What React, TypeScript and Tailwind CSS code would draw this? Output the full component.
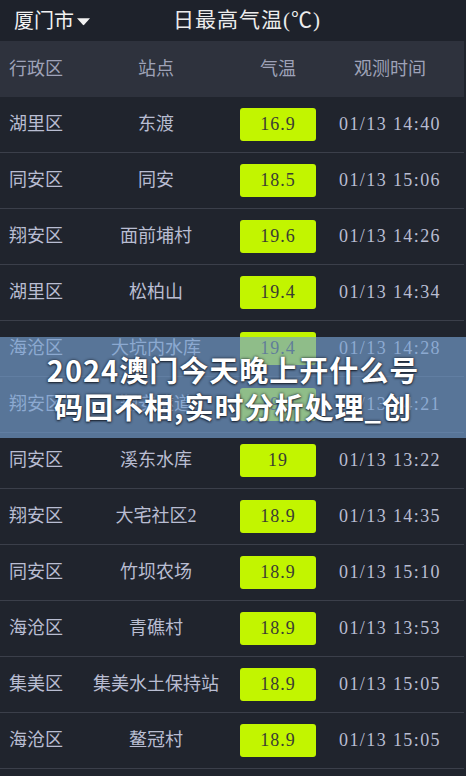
import React from 'react';

interface StationRow {
  district: string;
  station: string;
  temp: string;
  time: string;
}

const rows: StationRow[] = [
  { district: '湖里区', station: '东渡', temp: '16.9', time: '01/13 14:40' },
  { district: '同安区', station: '同安', temp: '18.5', time: '01/13 15:06' },
  { district: '翔安区', station: '面前埔村', temp: '19.6', time: '01/13 14:26' },
  { district: '湖里区', station: '松柏山', temp: '19.4', time: '01/13 14:34' },
  { district: '海沧区', station: '大坑内水库', temp: '19.4', time: '01/13 14:28' },
  { district: '翔安区', station: '翔安隧道', temp: '19.2', time: '01/13 14:21' },
  { district: '同安区', station: '溪东水库', temp: '19', time: '01/13 13:22' },
  { district: '翔安区', station: '大宅社区2', temp: '18.9', time: '01/13 14:35' },
  { district: '同安区', station: '竹坝农场', temp: '18.9', time: '01/13 15:10' },
  { district: '海沧区', station: '青礁村', temp: '18.9', time: '01/13 13:53' },
  { district: '集美区', station: '集美水土保持站', temp: '18.9', time: '01/13 15:05' },
  { district: '海沧区', station: '鳌冠村', temp: '18.9', time: '01/13 15:05' },
];

const cjk = "font-['Liberation_Serif','Noto_Sans_CJK_SC',serif]";
const cols = 'grid grid-cols-[78px_156px_88px_136px] items-center';

const App: React.FC = () => {
  return (
    <div className={`relative w-[466px] min-h-[776px] bg-[#20242d] overflow-hidden ${cjk}`}>
      {/* City selector / title bar */}
      <div className="h-[41px] bg-[#1e222b] flex items-center">
        <div className="flex items-center pl-[14px] w-[173px]">
          <span className="text-[20px] leading-none text-[#f2f2f2]">厦门市</span>
          <svg width="15" height="9" viewBox="0 0 15 9" className="ml-[2px] mt-[1px]">
            <path d="M1 1.2 H14 L8.2 7.8 Q7.5 8.5 6.8 7.8 Z" fill="#f2f2f2" />
          </svg>
        </div>
        <span className="text-[21px] leading-none tracking-[1px] text-[#ececec]">日最高气温(℃)</span>
      </div>

      {/* Column headers */}
      <div className={`${cols} h-[56px] w-[464px] bg-[#2e323d] text-[18px] text-[#9ea2b8]`}>
        <span className="pl-[9px]">行政区</span>
        <span className="text-center">站点</span>
        <span className="text-center">气温</span>
        <span className="text-center">观测时间</span>
      </div>

      {/* Data rows */}
      <div className="w-[464px]">
        {rows.map((row, index) => (
          <div
            key={index}
            className={`${cols} h-[56px] border-b border-[#3b3f4a] text-[18px] text-[#b9bdd2]`}
          >
            <span className="pl-[9px] whitespace-nowrap">{row.district}</span>
            <span className="text-center whitespace-nowrap">{row.station}</span>
            <div className="flex justify-center">
              <div className="w-[76px] h-[33px] rounded-[3px] bg-[#c2f500] flex items-center justify-center text-[18px] tracking-[1px] text-[#3a3d33]">
                {row.temp}
              </div>
            </div>
            <span className="text-center whitespace-nowrap tracking-[1.4px]">{row.time}</span>
          </div>
        ))}
      </div>

      {/* Headline banner over the table */}
      <div className="absolute left-0 top-[337px] w-[466px] h-[101px] bg-[rgba(117,160,208,0.66)] flex flex-col items-center justify-center">
        <p className="font-['Noto_Sans_CJK_SC',sans-serif] font-bold text-[29px] leading-[37px] tracking-[1px] text-white text-center [text-shadow:0_0_3px_rgba(20,25,35,0.9),0_1px_2px_rgba(20,25,35,0.8)]">
          2024澳门今天晚上开什么号
          <br />
          码回不相,实时分析处理_创
        </p>
      </div>
    </div>
  );
};

export default App;
